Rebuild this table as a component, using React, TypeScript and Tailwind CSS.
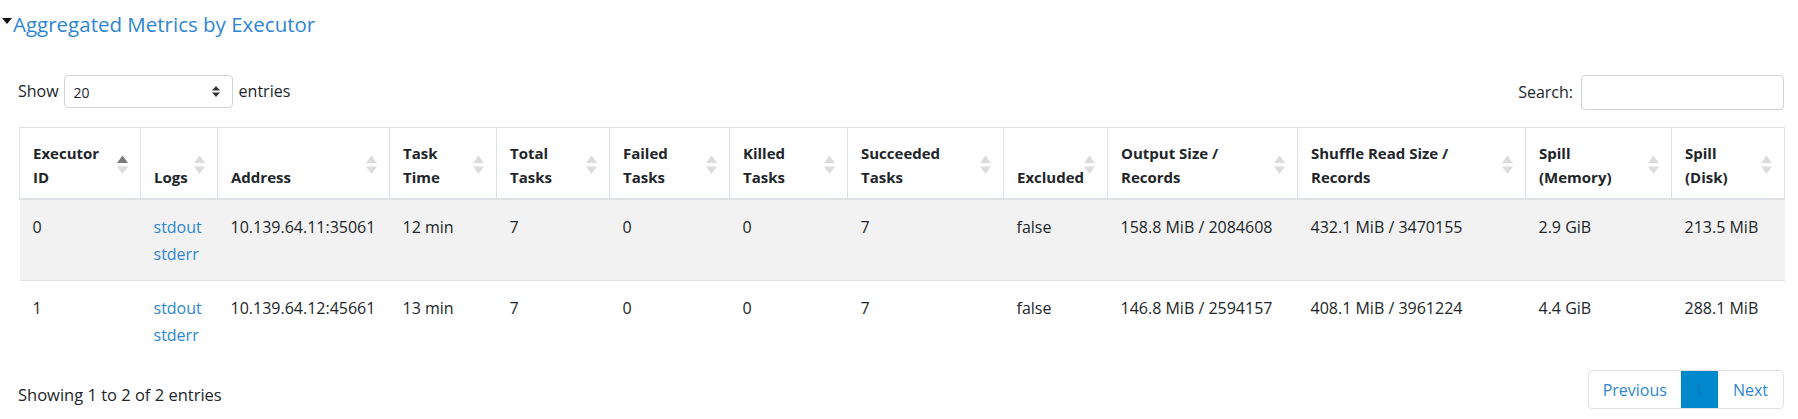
type Col = { label: string[]; width: number; active?: boolean };

const cols: Col[] = [
  { label: ['Executor', 'ID'], width: 121, active: true },
  { label: ['Logs'], width: 77 },
  { label: ['Address'], width: 172 },
  { label: ['Task', 'Time'], width: 107 },
  { label: ['Total', 'Tasks'], width: 113 },
  { label: ['Failed', 'Tasks'], width: 120 },
  { label: ['Killed', 'Tasks'], width: 118 },
  { label: ['Succeeded', 'Tasks'], width: 156 },
  { label: ['Excluded'], width: 104 },
  { label: ['Output Size /', 'Records'], width: 190 },
  { label: ['Shuffle Read Size /', 'Records'], width: 228 },
  { label: ['Spill', '(Memory)'], width: 146 },
  { label: ['Spill', '(Disk)'], width: 113 },
];

const rows = [
  ['0', '10.139.64.11:35061', '12 min', '7', '0', '0', '7', 'false', '158.8 MiB / 2084608', '432.1 MiB / 3470155', '2.9 GiB', '213.5 MiB'],
  ['1', '10.139.64.12:45661', '13 min', '7', '0', '0', '7', 'false', '146.8 MiB / 2594157', '408.1 MiB / 3961224', '4.4 GiB', '288.1 MiB'],
];

function SortIcon({ active }: { active?: boolean }) {
  return (
    <svg width="11" height="19" viewBox="0 0 11 19" className="absolute right-[12px] top-1/2 -translate-y-1/2 mt-[2px]">
      <path d="M5.5 0 L11 7.5 L0 7.5 Z" fill={active ? '#7a7a7a' : '#dcdcdc'} />
      <path d="M0 11 L11 11 L5.5 18.5 Z" fill="#dcdcdc" />
    </svg>
  );
}

export default function App() {
  return (
    <div className="bg-white w-[1798px] h-[419px] overflow-hidden text-[#212529]" style={{ fontFamily: '"Open Sans", "Noto Sans", sans-serif' }}>
      <div className="flex items-center pt-[10px] h-[38px] leading-[28px]">
        <svg width="10" height="6" viewBox="0 0 10 6" className="ml-[2px] mt-[-6px]">
          <path d="M0 0 L10 0 L5 6 Z" fill="#111" />
        </svg>
        <span className="text-[20.5px] text-[#2e86d3] ml-[1px]">Aggregated Metrics by Executor</span>
      </div>

      <div className="pl-[18px] w-[1784px]">
        <div className="flex items-start justify-between mt-[37px] h-[35px] text-[16px] leading-[24px]">
          <div className="flex items-start">
            <span className="pt-[4px]">Show</span>
            <div className="ml-[5px] w-[169px] h-[33px] border border-[#ced4da] rounded-[4px] flex items-center justify-between pl-[9px] pr-[12px]">
              <span className="text-[14px] pt-[3px]">20</span>
              <svg width="8" height="11" viewBox="0 0 8 11">
                <path d="M4 0 L8 4.5 L0 4.5 Z" fill="#333" />
                <path d="M0 6.5 L8 6.5 L4 11 Z" fill="#333" />
              </svg>
            </div>
            <span className="pt-[4px] ml-[6px]">entries</span>
          </div>
          <div className="flex items-start">
            <span className="pt-[5px]">Search:</span>
            <div className="ml-[8px] w-[203px] h-[35px] border border-[#ced4da] rounded-[4px]" />
          </div>
        </div>

        <table className="mt-[17px] ml-[1px] table-fixed border-collapse w-[1765px]">
          <colgroup>
            {cols.map((c, i) => (
              <col key={i} style={{ width: c.width }} />
            ))}
          </colgroup>
          <thead>
            <tr>
              {cols.map((c, i) => (
                <th
                  key={i}
                  className="relative align-bottom text-left font-bold text-[15px] leading-[24px] whitespace-nowrap border border-[#dee2e6] border-b-2 pl-[13px] pr-[24px] pt-[13px] pb-[9px]"
                >
                  {c.label.map((l, j) => (
                    <div key={j}>{l}</div>
                  ))}
                  <SortIcon active={c.active} />
                </th>
              ))}
            </tr>
          </thead>
          <tbody className="text-[16px] leading-[27px]">
            {rows.map((r, i) => (
              <tr key={i} className={`${i === 0 ? 'bg-[#f2f2f2]' : 'bg-white border-t border-[#dee2e6]'}`}>
                <td className="align-top pl-[13px] pt-[14px] pb-[12px]">{r[0]}</td>
                <td className="align-top pl-[13px] pt-[14px] pb-[12px] text-[#2e86d3]">
                  <div>stdout</div>
                  <div>stderr</div>
                </td>
                {r.slice(1).map((v, j) => (
                  <td key={j} className="align-top pl-[13px] pt-[14px] pb-[12px] whitespace-nowrap">
                    {v}
                  </td>
                ))}
              </tr>
            ))}
          </tbody>
        </table>

        <div className="flex items-start justify-between mt-[9px] text-[16px] leading-[24px]">
          <span className="pt-[13px] text-[16.5px]">Showing 1 to 2 of 2 entries</span>
          <div className="flex h-[39px] border border-[#dee2e6] rounded-[4px] overflow-hidden text-[#2e86d3]">
            <span className="px-[14px] flex items-center">Previous</span>
            <span className="w-[37px] bg-[#0088cc] text-[#1479c0] flex items-center justify-center">1</span>
            <span className="px-[15px] flex items-center">Next</span>
          </div>
        </div>
      </div>
    </div>
  );
}
